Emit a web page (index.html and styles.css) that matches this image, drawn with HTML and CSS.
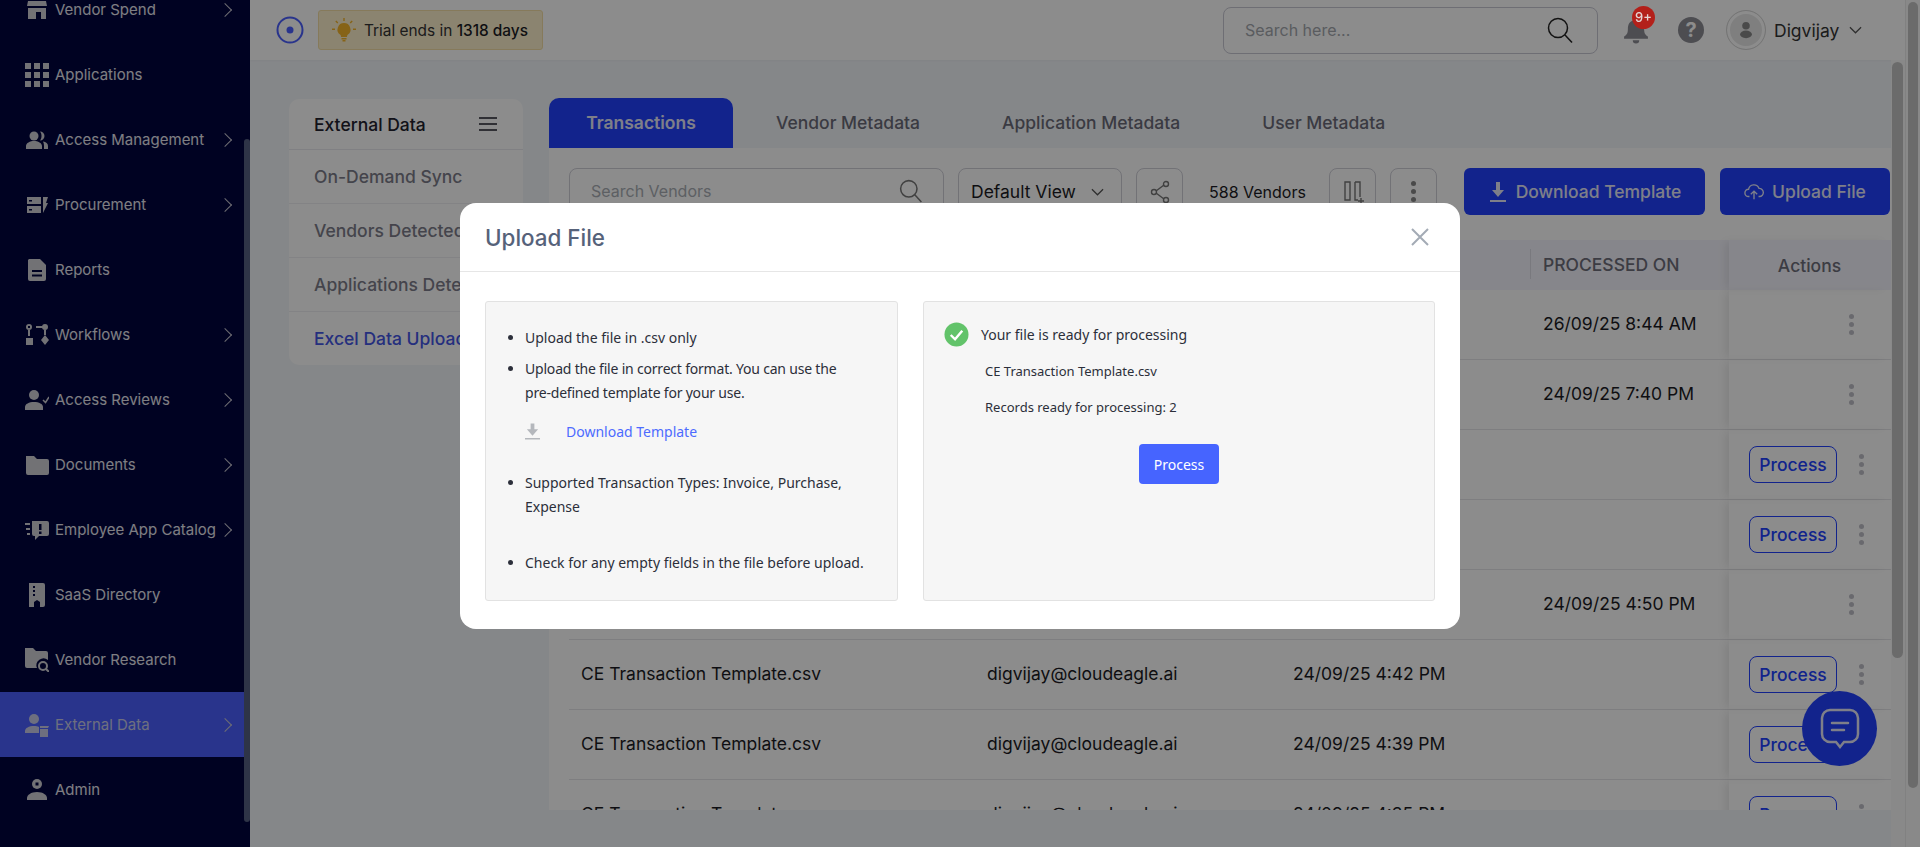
FILE: index.html
```html
<!DOCTYPE html>
<html lang="en">
<head>
    <meta charset="UTF-8">
    <meta name="viewport" content="width=device-width, initial-scale=1.0">
    <title>External Data - Upload File</title>
    <link rel="stylesheet" href="styles.css">
</head>
<body>
    <div class="app">
        <aside class="sidebar">
            <nav class="nav-list">
                <a class="nav-item">
                    <svg class="nav-icon" viewBox="0 0 24 24"><path d="M4 -2h16v3H4zM3 3h18l1 5H2zM3 10h18v11h-5v-7H11v7H3z"/></svg>
                    <span>Vendor Spend</span><i class="nav-arrow"></i>
                </a>
                <a class="nav-item">
                    <svg class="nav-icon" viewBox="0 0 24 24"><path d="M0 0h6v6H0zM9 0h6v6H9zM18 0h6v6h-6zM0 9h6v6H0zM9 9h6v6H9zM18 9h6v6h-6zM0 18h6v6H0zM9 18h6v6H9zM18 18h6v6h-6z"/></svg>
                    <span>Applications</span>
                </a>
                <a class="nav-item">
                    <svg class="nav-icon" viewBox="0 0 24 24"><circle cx="9" cy="8" r="4.5"/><path d="M1 21v-3c0-3 4-5 8-5s8 2 8 5v3zM15 3.5a4.5 4.5 0 0 1 0 9c1-1.300 1.500-2.800 1.500-4.500S16 4.800 15 3.500zM18 13.500c3 .5 5 2 5 4.500v3h-4v-3c0-1.800-.3-3.300-1-4.500z"/></svg>
                    <span>Access Management</span><i class="nav-arrow"></i>
                </a>
                <a class="nav-item">
                    <svg class="nav-icon" viewBox="0 0 24 24"><path d="M2 4h14v7H2zM2 13h14v7H2zM18 4h5l-2 6h2l-5 10z" fill-rule="evenodd"/><path class="nav-cut" d="M4 7h3v1.500H4zM4 16h3v1.500H4z"/></svg>
                    <span>Procurement</span><i class="nav-arrow"></i>
                </a>
                <a class="nav-item">
                    <svg class="nav-icon" viewBox="0 0 24 24"><path d="M4 1h11l6 6v14a2 2 0 0 1-2 2H5a2 2 0 0 1-2-2V2z"/><path class="nav-cut" d="M7 12h10v2H7zM7 16.500h10v2H7z"/></svg>
                    <span>Reports</span>
                </a>
                <a class="nav-item">
                    <svg class="nav-icon" viewBox="0 0 24 24"><circle cx="4" cy="4" r="3"/><path class="nav-cut" d="M3 3h2v2H3z"/><path d="M3 7h2v6H3zM1 15h7v7H1zM11 3h7v2h-7z"/><circle cx="20" cy="4" r="3"/><path d="M19 7h2v5h-2zM20 12l4 5-4 5-4-5z"/></svg>
                    <span>Workflows</span><i class="nav-arrow"></i>
                </a>
                <a class="nav-item">
                    <svg class="nav-icon" viewBox="0 0 24 24"><circle cx="9" cy="7" r="5"/><path d="M0 22v-3c0-3 4-5 9-5s9 2 9 5v3z"/><path class="nav-tick" d="M18 12l2.500 2.500L24 9"/></svg>
                    <span>Access Reviews</span><i class="nav-arrow"></i>
                </a>
                <a class="nav-item">
                    <svg class="nav-icon" viewBox="0 0 24 24"><path d="M1 3h8l3 3h10a2 2 0 0 1 2 2v12a2 2 0 0 1-2 2H3a2 2 0 0 1-2-2z"/></svg>
                    <span>Documents</span><i class="nav-arrow"></i>
                </a>
                <a class="nav-item">
                    <svg class="nav-icon" viewBox="0 0 24 24"><path d="M0 5h5v2H0zM1 10h4v2H1zM2 15h3v2H2zM7 3h15a2 2 0 0 1 2 2v11a2 2 0 0 1-2 2h-8l-4 4v-4H9a2 2 0 0 1-2-2z"/><path class="nav-cut" d="M14 6h2.500v6H14zM14 13.500h2.500V16H14z"/></svg>
                    <span>Employee App Catalog</span><i class="nav-arrow"></i>
                </a>
                <a class="nav-item">
                    <svg class="nav-icon" viewBox="0 0 24 24"><path d="M4 0h14a2 2 0 0 1 2 2v20a2 2 0 0 1-2 2H4z"/><path class="nav-cut" d="M8 3h2v2H8zM8 7h2v2H8zM8 11h2v2H8zM9 24v-5l3-2 3 2v5z"/></svg>
                    <span>SaaS Directory</span>
                </a>
                <a class="nav-item">
                    <svg class="nav-icon" viewBox="0 0 24 24"><path d="M0 0h8l3 3h10a2 2 0 0 1 2 2v7a7 7 0 0 0-11 8H2a2 2 0 0 1-2-2z"/><circle class="nav-ring" cx="18" cy="18" r="4"/><path class="nav-line" d="M21 21l3 3"/></svg>
                    <span>Vendor Research</span>
                </a>
                <a class="nav-item nav-active">
                    <svg class="nav-icon" viewBox="0 0 24 24"><circle cx="9" cy="6" r="5"/><path d="M0 20v-2c0-3 4-5 9-5 2 0 3.500.3 5 1v6z"/><path d="M15 16h8v8h-8zM15 13h9l-1 2h-8z"/></svg>
                    <span>External Data</span><i class="nav-arrow"></i>
                </a>
                <a class="nav-item">
                    <svg class="nav-icon" viewBox="0 0 24 24"><circle cx="12" cy="6" r="5"/><path class="nav-cut" d="M10.500 4.500h3v3h-3z"/><path d="M2 22v-2c0-3 4-6 10-6s10 3 10 6v2z"/></svg>
                    <span>Admin</span>
                </a>
            </nav>
            <div class="sidebar-thumb"></div>
        </aside>

        <div class="main">
            <header class="topbar">
                <svg class="top-logo" viewBox="0 0 28 28"><circle cx="14" cy="14" r="12.500"/><circle class="top-logo-dot" cx="14" cy="14" r="3.500"/></svg>
                <div class="trial-pill">
                    <svg class="bulb" viewBox="0 0 24 24"><path d="M12 5a6.500 6.500 0 0 0-4 11.600c.8.7 1 1.400 1 2.400h6c0-1 .2-1.700 1-2.400A6.500 6.500 0 0 0 12 5zM9.500 20h5v1.500h-5zM10.500 22h3v1.500h-3z"/><path d="M11.300 0h1.400v3h-1.400zM0 10.500h3v1.400H0zM21 10.500h3v1.400h-3zM3.300 3.500l1-1 2 2-1 1zM20.700 3.500l-1-1-2 2 1 1z"/></svg>
                    <span>Trial ends in <b>1318 days</b></span>
                </div>
                <div class="top-search">
                    <span>Search here...</span>
                    <svg class="top-search-icon" viewBox="0 0 26 26"><circle cx="11" cy="11" r="9.500"/><path d="M18 18l7 7.500"/></svg>
                </div>
                <div class="bell">
                    <svg viewBox="0 0 24 26"><path d="M12 2a2 2 0 0 1 2 2c4 1 5.500 4 5.500 8 0 4 1 5.500 3.500 7v2H1v-2c2.500-1.500 3.500-3 3.500-7 0-4 1.500-7 5.500-8a2 2 0 0 1 2-2zM9 22.500h6a3 3 0 0 1-6 0z"/></svg>
                    <span class="bell-badge">9+</span>
                </div>
                <div class="help-icon">?</div>
                <div class="avatar">
                    <svg viewBox="0 0 24 24"><circle cx="12" cy="8" r="3.500"/><ellipse cx="12" cy="16" rx="5.500" ry="3.500"/></svg>
                </div>
                <span class="user-name">Digvijay</span>
                <svg class="chev-down" viewBox="0 0 14 8"><path d="M1 1l6 6 6-6"/></svg>
            </header>

            <div class="content">
                <section class="side-card">
                    <div class="side-head">
                        <span>External Data</span>
                        <svg class="burger" viewBox="0 0 18 14"><path d="M0 1h18M0 7h18M0 13h18"/></svg>
                    </div>
                    <div class="side-link">On-Demand Sync</div>
                    <div class="side-link">Vendors Detected</div>
                    <div class="side-link">Applications Detected</div>
                    <div class="side-link side-link-active">Excel Data Upload</div>
                </section>

                <section class="data-area">
                    <div class="tabs">
                        <div class="tab tab-active">Transactions</div>
                        <div class="tab tab-vendor">Vendor Metadata</div>
                        <div class="tab tab-app">Application Metadata</div>
                        <div class="tab tab-user">User Metadata</div>
                    </div>
                    <div class="data-card">
                        <div class="toolbar">
                            <div class="tool-box vendor-search">
                                <span>Search Vendors</span>
                                <svg class="line-icon" viewBox="0 0 22 22"><circle cx="9" cy="9" r="7.500"/><path d="M14.500 14.500l6 6.500"/></svg>
                            </div>
                            <div class="tool-box view-select">
                                <span>Default View</span>
                                <svg class="chev-down" viewBox="0 0 14 8"><path d="M1 1l6 6 6-6"/></svg>
                            </div>
                            <div class="tool-box tool-icon">
                                <svg class="line-icon" viewBox="0 0 22 24"><circle cx="17" cy="4" r="2.500"/><circle cx="5" cy="12" r="2.500"/><circle cx="17" cy="20" r="2.500"/><path d="M7 11l8-6M7 13l8 6"/></svg>
                            </div>
                            <span class="vendor-count">588 Vendors</span>
                            <div class="tool-box tool-icon">
                                <svg class="line-icon" viewBox="0 0 22 24"><path d="M3 2h5v18H3zM13 2h5v15M13 2v18h3M19 18v6M16 21h6"/></svg>
                            </div>
                            <div class="tool-box tool-icon">
                                <span class="dots"></span>
                            </div>
                            <button class="btn-primary btn-download">
                                <svg viewBox="0 0 20 22"><path d="M8 1h4v8h4l-6 7-6-7h4zM2 19h16v2H2z"/></svg>
                                Download Template
                            </button>
                            <button class="btn-primary btn-upload">
                                <svg class="cloud" viewBox="0 0 22 20"><path d="M6 15H5a4 4 0 0 1 0-8 6 6 0 0 1 11.500-1A4.500 4.500 0 0 1 17 15h-1M11 18V9M7.500 12.500L11 9l3.500 3.500"/></svg>
                                Upload File
                            </button>
                        </div>

                        <div class="table-head">
                            <div></div><div></div><div></div>
                            <div class="head-cell">PROCESSED ON</div>
                            <div class="actions-cell head-actions">Actions</div>
                        </div>
                        <div class="table-row">
                            <div></div><div></div><div></div>
                            <div>26/09/25 8:44 AM</div>
                            <div class="actions-cell"><span class="dots"></span></div>
                        </div>
                        <div class="table-row">
                            <div></div><div></div><div></div>
                            <div>24/09/25 7:40 PM</div>
                            <div class="actions-cell"><span class="dots"></span></div>
                        </div>
                        <div class="table-row">
                            <div></div><div></div><div></div><div></div>
                            <div class="actions-cell has-process"><button class="btn-process">Process</button><span class="dots"></span></div>
                        </div>
                        <div class="table-row">
                            <div></div><div></div><div></div><div></div>
                            <div class="actions-cell has-process"><button class="btn-process">Process</button><span class="dots"></span></div>
                        </div>
                        <div class="table-row">
                            <div></div><div></div><div></div>
                            <div>24/09/25 4:50 PM</div>
                            <div class="actions-cell"><span class="dots"></span></div>
                        </div>
                        <div class="table-row">
                            <div>CE Transaction Template.csv</div><div>digvijay@cloudeagle.ai</div><div>24/09/25 4:42 PM</div><div></div>
                            <div class="actions-cell has-process"><button class="btn-process">Process</button><span class="dots"></span></div>
                        </div>
                        <div class="table-row">
                            <div>CE Transaction Template.csv</div><div>digvijay@cloudeagle.ai</div><div>24/09/25 4:39 PM</div><div></div>
                            <div class="actions-cell has-process"><button class="btn-process">Process</button><span class="dots"></span></div>
                        </div>
                        <div class="table-row">
                            <div>CE Transaction Template.csv</div><div>digvijay@cloudeagle.ai</div><div>24/09/25 4:35 PM</div><div></div>
                            <div class="actions-cell has-process"><button class="btn-process">Process</button><span class="dots"></span></div>
                        </div>
                    </div>
                </section>

                <div class="inner-scroll"><div class="inner-thumb"></div></div>
            </div>
        </div>

        <div class="page-scroll"><div class="page-thumb"></div></div>

        <button class="chat-fab">
            <svg viewBox="0 0 40 42"><path d="M10 2h20a8 8 0 0 1 8 8v16a8 8 0 0 1-8 8h-6l-4 5-4-5h-6a8 8 0 0 1-8-8V10a8 8 0 0 1 8-8z"/><path d="M12 15h16M12 22h12"/></svg>
        </button>
    </div>

    <div class="backdrop">
        <div class="modal">
            <div class="modal-header">
                <h2>Upload File</h2>
                <svg class="modal-close" viewBox="0 0 18 18"><path d="M1 1l16 16M17 1L1 17"/></svg>
            </div>
            <div class="modal-body">
                <div class="panel panel-left">
                    <ul class="rules">
                        <li>Upload the file in .csv only</li>
                        <li class="rule-format">Upload the file in correct format. You can use the <span class="no-break">pre-defined</span> template for your use.
                            <a class="template-link">
                                <svg viewBox="0 0 16 18"><path d="M6 0h4v6h4l-6 7-6-7h4zM0 15.500h16V17H0z"/></svg>
                                <span>Download Template</span>
                            </a>
                        </li>
                        <li class="rule-types">Supported Transaction Types: Invoice, Purchase, Expense</li>
                        <li>Check for any empty fields in the file before upload.</li>
                    </ul>
                </div>
                <div class="panel panel-right">
                    <div class="ready-line">
                        <svg viewBox="0 0 26 26"><circle cx="13" cy="13" r="12.500"/><path d="M7 13.500l4.500 4.500L19 9"/></svg>
                        <span>Your file is ready for processing</span>
                    </div>
                    <p class="file-info">CE Transaction Template.csv</p>
                    <p class="file-info">Records ready for processing: 2</p>
                    <button class="btn-modal-process">Process</button>
                </div>
            </div>
        </div>
    </div>
</body>
</html>
```

FILE: styles.css
```css
* {
    box-sizing: border-box;
}

html, body {
    height: 100%;
}

body {
    margin: 0;
    font-family: Inter, "Liberation Sans", sans-serif;
    background-color: #f3f6fa;
    color: #1b1b24;
    overflow: hidden;
}

button {
    font-family: inherit;
    cursor: pointer;
}

.app {
    display: flex;
    height: 847px;
}

/* Sidebar */
.sidebar {
    position: relative;
    flex: 0 0 250px;
    height: 100%;
    background-color: #00043e;
    overflow: hidden;
}

.nav-list {
    width: 244px;
    margin-top: -23px;
}

.nav-item {
    display: flex;
    align-items: center;
    height: 65px;
    padding-left: 25px;
    color: #e6e6ee;
    font-size: 15px;
}

.nav-item span {
    margin-left: 6px;
    white-space: nowrap;
}

.nav-icon {
    flex: 0 0 24px;
    width: 24px;
    height: 24px;
    fill: #cfd0d6;
}

.nav-cut {
    fill: #00043e;
}

.nav-tick {
    fill: none;
    stroke: #cfd0d6;
    stroke-width: 1.5;
}

.nav-ring {
    fill: none;
    stroke: #cfd0d6;
    stroke-width: 2;
}

.nav-line {
    stroke: #cfd0d6;
    stroke-width: 2;
}

.nav-arrow {
    width: 10px;
    height: 10px;
    margin-left: auto;
    margin-right: 14px;
    border-top: 1.5px solid #c8c8d2;
    border-right: 1.5px solid #c8c8d2;
    transform: rotate(45deg);
}

.nav-active {
    background-color: #4c60ff;
    color: #c8cbe8;
}

.nav-active .nav-icon {
    fill: #c8cbe8;
}

.sidebar-thumb {
    position: absolute;
    top: 139px;
    left: 244px;
    width: 6px;
    height: 683px;
    border-radius: 3px;
    background-color: #545f82;
}

/* Top bar */
.main {
    flex: 1;
    display: flex;
    flex-direction: column;
    min-width: 0;
}

.topbar {
    display: flex;
    align-items: center;
    flex: 0 0 60px;
    padding-left: 26px;
    background-color: #fff;
    box-shadow: 0 1px 2px rgba(0, 0, 0, 0.04);
}

.top-logo {
    width: 28px;
    height: 28px;
    fill: none;
    stroke: #4c60ff;
    stroke-width: 2;
}

.top-logo-dot {
    fill: #4c60ff;
    stroke: none;
}

.trial-pill {
    display: flex;
    align-items: center;
    width: 225px;
    height: 40px;
    margin-left: 14px;
    padding-left: 13px;
    background-color: #fdf0cc;
    border: 1px solid #f4dfa6;
    border-radius: 3px;
    font-size: 15.4px;
    color: #333;
}

.trial-pill b {
    font-weight: 500;
    color: #1b1b24;
}

.bulb {
    width: 24px;
    height: 24px;
    margin-right: 8px;
    fill: #f5b52a;
}

.top-search {
    display: flex;
    align-items: center;
    justify-content: space-between;
    width: 375px;
    height: 47px;
    margin-left: 680px;
    padding: 0 24px 0 21px;
    border: 1px solid #c9c9d4;
    border-radius: 8px;
    font-size: 16px;
    color: #a4a8ae;
}

.top-search-icon {
    width: 26px;
    height: 26px;
    fill: none;
    stroke: #222;
    stroke-width: 1.5;
}

.bell {
    position: relative;
    width: 26px;
    height: 30px;
    margin-left: 25px;
}

.bell svg {
    width: 26px;
    height: 30px;
    fill: #8c8c94;
}

/* the badge stays bright above the backdrop in the reference */
.bell-badge {
    position: absolute;
    z-index: 10;
    top: -9px;
    left: 9px;
    width: 23px;
    height: 23px;
    border-radius: 50%;
    background-color: #b3201a;
    color: #e4d4d4;
    font-size: 13px;
    font-weight: 500;
    line-height: 23px;
    text-align: center;
}

.help-icon {
    width: 26px;
    height: 26px;
    margin-left: 29px;
    border-radius: 50%;
    background-color: #8c8c94;
    color: #fff;
    font-size: 20px;
    font-weight: 700;
    line-height: 26px;
    text-align: center;
}

.avatar {
    display: flex;
    align-items: center;
    justify-content: center;
    width: 40px;
    height: 40px;
    margin-left: 22px;
    border: 1px solid #d5d5d5;
    border-radius: 50%;
    box-shadow: inset 0 0 0 3px #fff;
    background-color: #e8e8e8;
}

.avatar svg {
    width: 26px;
    height: 26px;
    fill: #888;
}

.user-name {
    margin-left: 8px;
    font-size: 17.5px;
    color: #333;
}

.chev-down {
    width: 13px;
    height: 8px;
    fill: none;
    stroke: #555;
    stroke-width: 1.3;
}

.topbar .chev-down {
    margin-left: 10px;
}

/* Page content */
.content {
    flex: 1;
    display: flex;
    min-height: 0;
    padding: 38px 0 37px 39px;
}

.side-card {
    flex: 0 0 234px;
    height: 266px;
    margin-top: 1px;
    margin-right: 26px;
    background-color: #fff;
    border-radius: 10px;
    overflow: hidden;
    font-size: 17.5px;
}

.side-head {
    display: flex;
    align-items: center;
    justify-content: space-between;
    height: 51px;
    padding: 0 26px 0 25px;
    border-bottom: 1px solid #e9e9ee;
    font-weight: 500;
    color: #22222e;
}

.burger {
    width: 18px;
    height: 14px;
    fill: none;
    stroke: #22222e;
    stroke-width: 1.6;
}

.side-link {
    height: 54px;
    padding-left: 25px;
    border-bottom: 1px solid #eeeef2;
    font-weight: 500;
    line-height: 53px;
    color: #7d7d8a;
    white-space: nowrap;
}

.side-link-active {
    border-bottom: 0;
    color: #4456e6;
}

.data-area {
    flex: 1;
    display: flex;
    flex-direction: column;
    min-width: 0;
}

.tabs {
    display: flex;
    flex: 0 0 50px;
    font-size: 17.5px;
    font-weight: 500;
    color: #6b6b78;
}

.tab {
    height: 50px;
    line-height: 50px;
    white-space: nowrap;
}

.tab-active {
    width: 184px;
    margin-right: 43px;
    background-color: #2141ff;
    border-radius: 10px 10px 0 0;
    color: #e6e8fa;
    font-weight: 600;
    text-align: center;
}

.tab-vendor,
.tab-app {
    margin-right: 82px;
}

.data-card {
    flex: 1;
    min-height: 0;
    padding: 20px 0 0 20px;
    background-color: #fff;
    overflow: hidden;
}

.toolbar {
    display: flex;
    align-items: center;
    height: 47px;
    margin-bottom: 25px;
}

.tool-box {
    display: flex;
    flex: none;
    align-items: center;
    justify-content: center;
    height: 47px;
    border: 1px solid #cfcfd8;
    border-radius: 8px;
}

.vendor-search {
    justify-content: space-between;
    width: 375px;
    padding: 0 20px 2px 21px;
    font-size: 16px;
    color: #a9aeb4;
}

.view-select {
    justify-content: space-between;
    width: 164px;
    margin-left: 14px;
    padding: 0 17px 0 12px;
    font-size: 17.5px;
    color: #1b1b24;
}

.tool-icon {
    width: 47px;
    margin-left: 14px;
}

.tool-box .dots {
    background-color: #888;
    box-shadow: 0 -8px 0 #888, 0 8px 0 #888;
}

.line-icon {
    width: 24px;
    height: 24px;
    fill: none;
    stroke: #777;
    stroke-width: 1.4;
}

.vendor-count {
    width: 120px;
    padding-left: 26px;
    font-size: 16px;
    white-space: nowrap;
}

.vendor-count + .tool-box {
    margin-left: 26px;
}

.btn-primary {
    display: flex;
    flex: none;
    align-items: center;
    justify-content: center;
    height: 47px;
    border: 0;
    border-radius: 6px;
    background-color: #2141ff;
    color: #e6e8fa;
    font-size: 17.5px;
    font-weight: 500;
}

.btn-primary svg {
    width: 20px;
    height: 22px;
    margin-right: 8px;
    fill: #e6e8fa;
}

.btn-primary .cloud {
    fill: none;
    stroke: #e6e8fa;
    stroke-width: 1.5;
}

.btn-download {
    width: 241px;
    margin-left: 27px;
}

.btn-upload {
    width: 170px;
    margin-left: 15px;
}

/* Table */
.table-head,
.table-row {
    display: grid;
    grid-template-columns: 406px 306px 250px 198px 161px;
    align-items: center;
}

.table-head {
    height: 50px;
    background-color: #f5f5fd;
    font-size: 17.5px;
    font-weight: 500;
    color: #6e6e7a;
}

.head-cell {
    position: relative;
    padding-left: 12px;
    padding-bottom: 2px;
}

.head-cell::before {
    content: "";
    position: absolute;
    top: -5px;
    left: -1px;
    width: 1px;
    height: 30px;
    background-color: #dcdce6;
}

.table-row {
    height: 70px;
    border-bottom: 1px solid #e6e6ea;
    font-size: 17.5px;
    color: #1b1b24;
}

.table-row > div {
    padding: 0 0 2px 12px;
    white-space: nowrap;
}

.table-row > .actions-cell,
.actions-cell {
    display: flex;
    align-items: center;
    justify-content: flex-end;
    height: 100%;
    padding: 0 36px 0 0;
    box-shadow: -6px 0 8px -2px rgba(0, 0, 0, 0.08);
}

.table-row > .has-process {
    justify-content: space-between;
    padding: 0 26px 0 20px;
}

.head-actions {
    justify-content: center;
    padding: 0;
}

.dots {
    display: block;
    width: 5px;
    height: 5px;
    border-radius: 50%;
    background-color: #c0c0c8;
    box-shadow: 0 -8px 0 #c0c0c8, 0 8px 0 #c0c0c8;
}

.btn-process {
    width: 88px;
    height: 37px;
    padding: 0;
    border: 1px solid #2141ff;
    border-radius: 8px;
    background-color: #fff;
    color: #2141ff;
    font-size: 17.5px;
    font-weight: 500;
}

/* Scrollbars */
.inner-scroll {
    flex: 0 0 14px;
    margin-top: -38px;
    margin-bottom: -37px;
    padding: 2px 2px 0 1px;
    background-color: #f9f9f9;
}

.inner-thumb {
    width: 11px;
    height: 596px;
    border-radius: 6px;
    background-color: #c4c4c4;
}

.page-scroll {
    flex: 0 0 15px;
    padding: 2px 2px 0 3px;
    background-color: #f9f9f9;
    border-left: 1px solid #ececec;
}

.page-thumb {
    width: 10px;
    height: 786px;
    margin-left: -1px;
    border-radius: 5px;
    background-color: #c4c4c4;
}

.chat-fab {
    position: fixed;
    left: 1802px;
    top: 691px;
    width: 75px;
    height: 75px;
    border: 0;
    padding: 0;
    border-radius: 50%;
    background-color: #2141ff;
}

.chat-fab svg {
    display: block;
    width: 40px;
    height: 42px;
    margin: 0 auto;
    fill: none;
    stroke: #e6e8fa;
    stroke-width: 2.500;
    stroke-linecap: round;
}

/* Modal */
.backdrop {
    position: fixed;
    inset: 0;
    display: flex;
    justify-content: center;
    align-items: flex-start;
    padding-top: 203px;
    background-color: rgba(0, 0, 0, 0.45);
}

.modal {
    width: 1000px;
    height: 426px;
    background-color: #fff;
    border-radius: 16px;
}

.modal-header {
    display: flex;
    align-items: center;
    justify-content: space-between;
    height: 69px;
    padding: 0 31px 0 25px;
    border-bottom: 1px solid #e6e6e6;
}

.modal-header h2 {
    margin: 0;
    font-size: 22.4px;
    font-weight: 500;
    color: #56627a;
}

.modal-close {
    width: 18px;
    height: 18px;
    fill: none;
    stroke: #a3abb5;
    stroke-width: 2;
}

.modal-body {
    display: flex;
    gap: 25px;
    padding: 29px 25px 0;
    font-family: "Noto Sans", sans-serif;
    font-size: 14px;
    color: #2c2f3a;
}

.panel {
    height: 300px;
    background-color: #f6f6f6;
    border: 1px solid #e2e2e2;
    border-radius: 3px;
}

.panel-left {
    flex: 0 0 413px;
}

.panel-right {
    flex: 1;
}

.rules {
    margin: 0;
    padding: 24px 27px 0 39px;
    line-height: 24px;
}

.rules li {
    margin-bottom: 7px;
}

.rules .rule-format {
    letter-spacing: -0.2px;
}

.no-break {
    white-space: nowrap;
}

.template-link {
    display: flex;
    align-items: center;
    height: 24px;
    margin-top: 15px;
    color: #4d6bff;
    letter-spacing: 0;
}

.template-link svg {
    width: 15px;
    height: 18px;
    margin-right: 26px;
    fill: #b4b7bc;
}

.rules .rule-types {
    margin-top: 27px;
    margin-bottom: 32px;
}

.ready-line {
    display: flex;
    align-items: center;
    margin: 20px 0 0 20px;
}

.ready-line svg {
    width: 25px;
    height: 25px;
    margin-right: 12px;
    fill: #62c36a;
}

.ready-line svg path {
    fill: none;
    stroke: #fff;
    stroke-width: 2.500;
}

.file-info {
    margin: 0;
    padding: 12px 0 0 61px;
    font-size: 13px;
    line-height: 24px;
}

.btn-modal-process {
    display: block;
    width: 80px;
    height: 40px;
    margin: 25px 0 0 215px;
    border: 0;
    border-radius: 4px;
    background-color: #4664ff;
    color: #fff;
    font-family: inherit;
    font-size: 14px;
    font-weight: 400;
}
```
